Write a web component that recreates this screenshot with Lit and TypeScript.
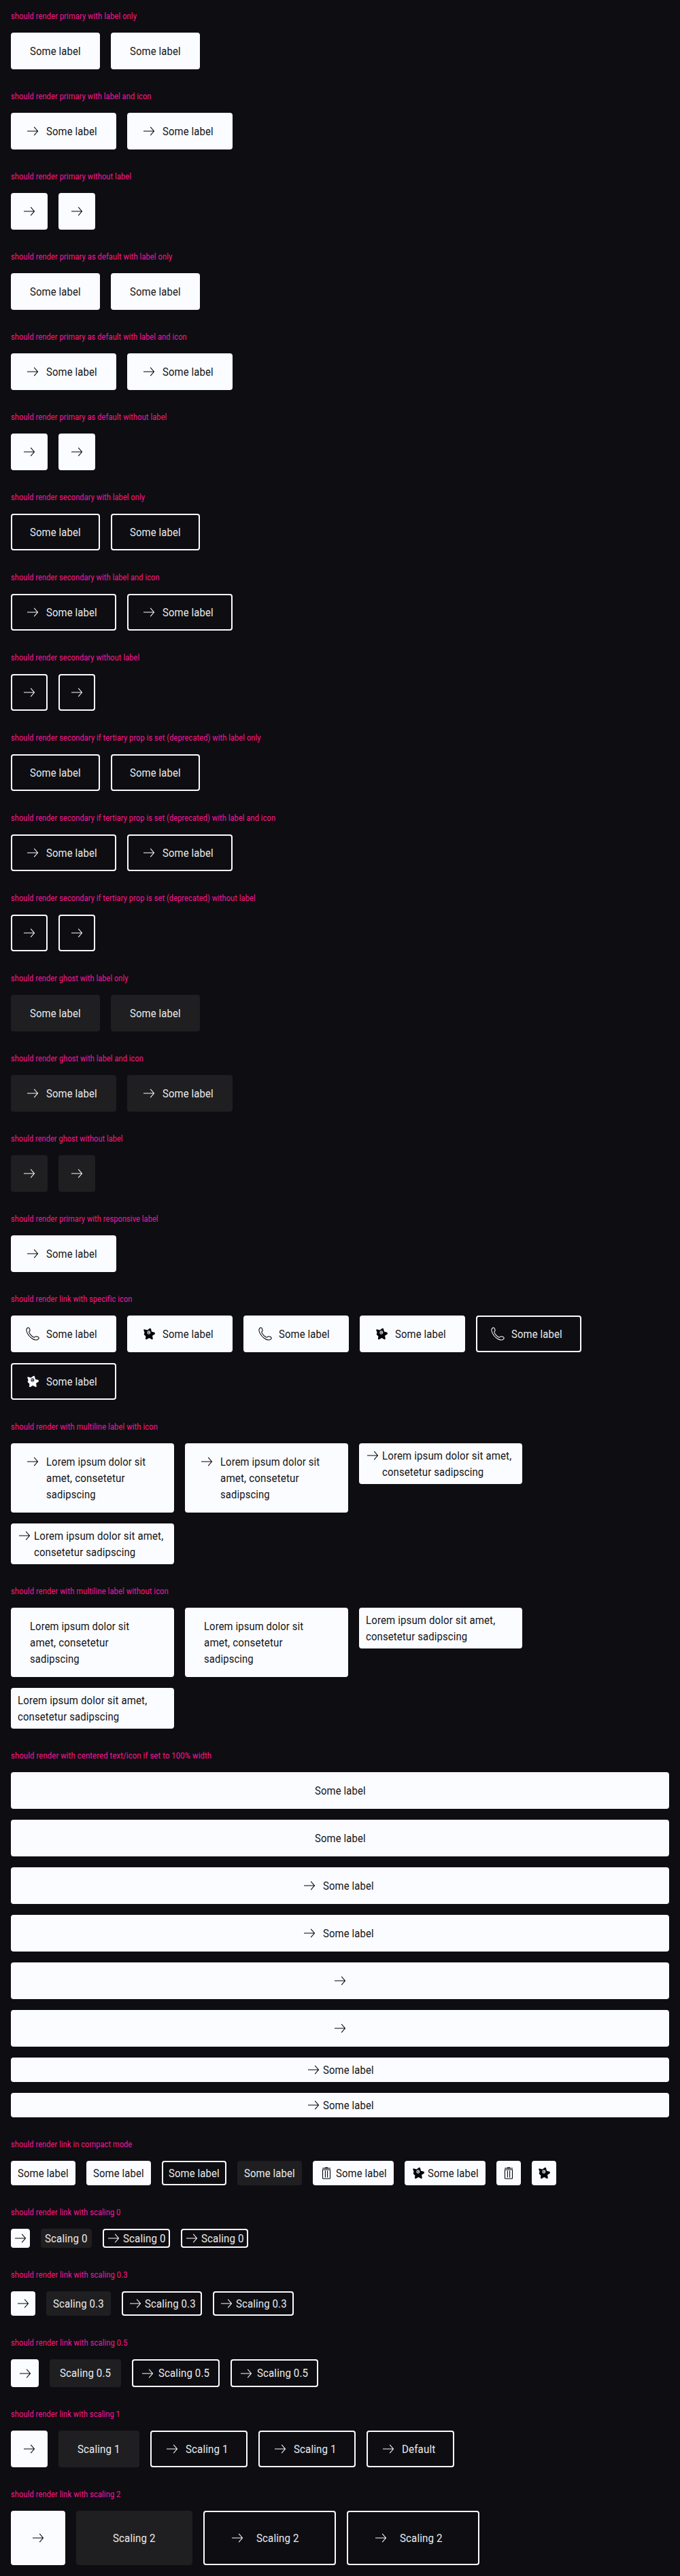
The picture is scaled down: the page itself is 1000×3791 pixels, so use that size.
import { LitElement, html, css, svg, nothing } from "lit";
import { customElement, property } from "lit/decorators.js";
import { classMap } from "lit/directives/class-map.js";

type Variant = "primary" | "secondary" | "ghost";
type IconName = "arrow" | "phone" | "star" | "trash";
type Line = [text: string, width: number];

interface LinkSpec {
  variant?: Variant;
  scale?: string;
  icon?: IconName;
  lines?: Line[];
  multiline?: boolean;
  full?: boolean;
}

interface Section {
  title: Line;
  links: LinkSpec[];
}

/* One line of text, condensed so that it spans the given measure. */
@customElement("fit-line")
class FitLine extends LitElement {
  static styles = css`
    :host {
      display: block;
      white-space: nowrap;
    }
    .text {
      display: inline-block;
      transform-origin: 0 50%;
      letter-spacing: 0.01em;
    }
  `;

  @property() text = "";
  @property({ type: Number }) measure = 0;

  render() {
    return html`<span class="text">${this.text}</span>`;
  }

  updated() {
    const el = this.renderRoot.querySelector<HTMLElement>(".text");
    if (!el) return;
    el.style.transform = `scaleX(${this.measure / el.offsetWidth})`;
    this.style.width = `${this.measure}px`;
  }
}

const icons = {
  arrow: svg`<path d="M4 12H19.4M14.2 5.9L19.5 12L14.2 18.1" />`,
  phone: svg`<path d="M4.2 3.5C5.6 2.3 6.9 2.8 7.6 4.6C8.4 6.7 8.3 7.7 7.2 8.5C6.5 9.1 6.6 9.9 7.3 11.1C8.8 13.6 10.7 15.5 13 16.8C14 17.3 14.7 17.2 15.2 16.5C16.1 15.4 17.4 15.4 19.3 16.3C21.3 17.2 21.8 18.4 20.5 19.6C18.4 21.6 15.2 21.3 11.8 19.2C8 16.8 5.2 13.4 3.6 9.6C2.4 6.6 2.5 4.8 4.2 3.5Z" />`,
  trash: svg`<path d="M6 4.9H18M9.8 3.9H14.2M6.5 6.9H17.5V19.6L17 20.2H7L6.5 19.6ZM10.4 8.5V18.5M13.6 8.5V18.5" />`,
  star: svg`<path class="solid" d="M4.2 6.2Q4.4 5 5.8 5.4L9.6 6.6L13 4Q14.6 3.4 15 4.8L16 8.8L20 9.8Q21.8 11 20.6 12.4L17 14.7L17.8 18.9Q17.6 20.6 16 20.1L12.3 17.9L9 20Q7.2 20.6 6.9 19.2L7.4 15.5L4.9 13.2Q4.4 12 5.6 10.2Z" />
    <ellipse class="face" cx="11.8" cy="10" rx="2.5" ry="2.8" />
    <circle class="solid" cx="11" cy="9.4" r="0.7" />
    <path class="solid" d="M12.4 8.6L13.4 8.8L12.9 10ZM10.4 11.2L13 11.2L12 12.2Z" />`,
};

@customElement("pure-link")
class PureLink extends LitElement {
  static styles = css`
    :host {
      display: block;
    }
    :host([full]) {
      flex: 0 0 100%;
    }
    .link {
      --py: 15px;
      --px: 28px;
      --pi: 20px;
      --gap: 8px;
      box-sizing: border-box;
      display: flex;
      justify-content: center;
      align-items: flex-start;
      gap: var(--gap);
      padding: calc(var(--py) - 2px) calc(var(--px) - 2px);
      border: 2px solid transparent;
      border-radius: 4px;
      font: 400 16px/24px Roboto, "Liberation Sans", sans-serif;
      text-decoration: none;
    }
    .s0 {
      --py: 2px;
      --px: 6px;
      --pi: 4px;
      --gap: 2px;
    }
    .s03 {
      --py: 6px;
      --px: 10px;
      --pi: 8px;
      --gap: 2px;
    }
    .s05 {
      --py: 8.5px;
      --px: 15px;
      --pi: 11px;
      --gap: 4px;
    }
    .s2 {
      --py: 28px;
      --px: 54px;
      --pi: 38px;
      --gap: 16px;
    }
    .with-icon {
      padding-left: calc(var(--pi) - 2px);
    }
    .icon-only {
      padding: calc(var(--py) - 2px);
    }
    .multiline {
      width: 240px;
      justify-content: flex-start;
    }
    .primary {
      background: #fbfcff;
      border-color: #fbfcff;
      color: #010205;
      --face: #fbfcff;
    }
    .secondary {
      border-color: #fbfcff;
      color: #fbfcff;
      --face: #0e0e12;
    }
    .ghost {
      background: #1f1f21;
      border-color: #1f1f21;
      color: #fbfcff;
    }
    .label {
      margin: 0.5px 0 -0.5px;
      opacity: 0.93;
    }
    .icon {
      flex: none;
      width: 24px;
      height: 24px;
      fill: none;
      stroke: currentColor;
      stroke-width: 1.05;
    }
    .solid {
      fill: currentColor;
      stroke: none;
    }
    .face {
      fill: var(--face);
      stroke: none;
      opacity: 0.8;
    }
  `;

  @property({ attribute: false }) spec: LinkSpec = {};

  render() {
    const { variant = "primary", scale = "s1", icon, lines, multiline } = this.spec;
    const classes = {
      link: true,
      [variant]: true,
      [scale]: true,
      "with-icon": !!icon && !!lines,
      "icon-only": !lines,
      multiline: !!multiline,
    };
    return html`<a class=${classMap(classes)}>
      ${icon ? html`<svg class="icon" viewBox="0 0 24 24">${icons[icon]}</svg>` : nothing}
      ${lines
        ? html`<span class="label"
            >${lines.map(([text, width]) => html`<fit-line .text=${text} .measure=${width}></fit-line>`)}</span
          >`
        : nothing}
    </a>`;
  }
}

const some: Line[] = [["Some label", 75]];
const loremWide: Line[] = [
  ["Lorem ipsum dolor sit", 146.5],
  ["amet, consetetur", 115.5],
  ["sadipscing", 73],
];
const loremCompact: Line[] = [
  ["Lorem ipsum dolor sit amet,", 190],
  ["consetetur sadipscing", 149.5],
];

const twice = (spec: LinkSpec): LinkSpec[] => [spec, spec];

/* The three sections of a variant: label only, label and icon, icon only. */
const trio = (name: string, width: number, variant: Variant): Section[] => [
  { title: [`should render ${name} with label only`, width], links: twice({ variant, lines: some }) },
  {
    title: [`should render ${name} with label and icon`, width + 21.5],
    links: twice({ variant, icon: "arrow", lines: some }),
  },
  { title: [`should render ${name} without label`, width - 8], links: twice({ variant, icon: "arrow" }) },
];

const scaling = (name: string, titleWidth: number, width: number, scale: string): Section => {
  const lines: Line[] = [[`Scaling ${name}`, width]];
  return {
    title: [`should render link with scaling ${name}`, titleWidth],
    links: [
      { scale, icon: "arrow" },
      { scale, variant: "ghost", lines },
      ...twice({ scale, variant: "secondary", icon: "arrow", lines }),
      ...(name === "1"
        ? [{ variant: "secondary", icon: "arrow", lines: [["Default", 49]] } as LinkSpec]
        : []),
    ],
  };
};

const multi = (icon?: IconName): LinkSpec[] => [
  ...twice({ icon, lines: loremWide, multiline: true }),
  ...twice({ icon, lines: loremCompact, multiline: true, scale: "s03" }),
];

const sections: Section[] = [
  ...trio("primary", 185, "primary"),
  ...trio("primary as default", 237, "primary"),
  ...trio("secondary", 197, "secondary"),
  ...trio("secondary if tertiary prop is set (deprecated)", 368, "secondary"),
  ...trio("ghost", 173, "ghost"),
  { title: ["should render primary with responsive label", 217], links: [{ icon: "arrow", lines: some }] },
  {
    title: ["should render link with specific icon", 178.5],
    links: [
      { icon: "phone", lines: some },
      { icon: "star", lines: some },
      { icon: "phone", lines: some },
      { icon: "star", lines: some },
      { variant: "secondary", icon: "phone", lines: some },
      { variant: "secondary", icon: "star", lines: some },
    ],
  },
  { title: ["should render with multiline label with icon", 216], links: multi("arrow") },
  { title: ["should render with multiline label without icon", 232], links: multi() },
  {
    title: ["should render with centered text/icon if set to 100% width", 295],
    links: [
      ...twice({ full: true, lines: some }),
      ...twice({ full: true, icon: "arrow", lines: some }),
      ...twice({ full: true, icon: "arrow" }),
      ...twice({ full: true, icon: "arrow", lines: some, scale: "s03" }),
    ],
  },
  {
    title: ["should render link in compact mode", 178.5],
    links: [
      ...twice({ scale: "s03", lines: some }),
      { scale: "s03", variant: "secondary", lines: some },
      { scale: "s03", variant: "ghost", lines: some },
      { scale: "s03", icon: "trash", lines: some },
      { scale: "s03", icon: "star", lines: some },
      { scale: "s03", icon: "trash" },
      { scale: "s03", icon: "star" },
    ],
  },
  scaling("0", 161.5, 63, "s0"),
  scaling("0.3", 171.5, 74.6, "s03"),
  scaling("0.5", 171.5, 75, "s05"),
  scaling("1", 161, 63, "s1"),
  scaling("2", 161.5, 63, "s2"),
];

@customElement("app-root")
class AppRoot extends LitElement {
  static styles = css`
    :host {
      display: block;
      background: #0e0e12;
    }
    .page {
      display: flex;
      flex-direction: column;
      gap: 16px;
      padding-bottom: 16px;
    }
    .section {
      padding: 0 16px;
    }
    .title {
      height: 16px;
      margin: 0;
      padding: 16px 0;
      color: #ff1493;
      font: 400 12px/16px Roboto, "Liberation Sans", sans-serif;
    }
    .links {
      display: flex;
      flex-wrap: wrap;
      align-items: flex-start;
      gap: 16px;
    }
  `;

  render() {
    return html`<main class="page">
      ${sections.map(
        ({ title, links }) => html`<section class="section">
          <h2 class="title"><fit-line .text=${title[0]} .measure=${title[1]}></fit-line></h2>
          <div class="links">
            ${links.map((spec) => html`<pure-link .spec=${spec} ?full=${!!spec.full}></pure-link>`)}
          </div>
        </section>`,
      )}
    </main>`;
  }
}
